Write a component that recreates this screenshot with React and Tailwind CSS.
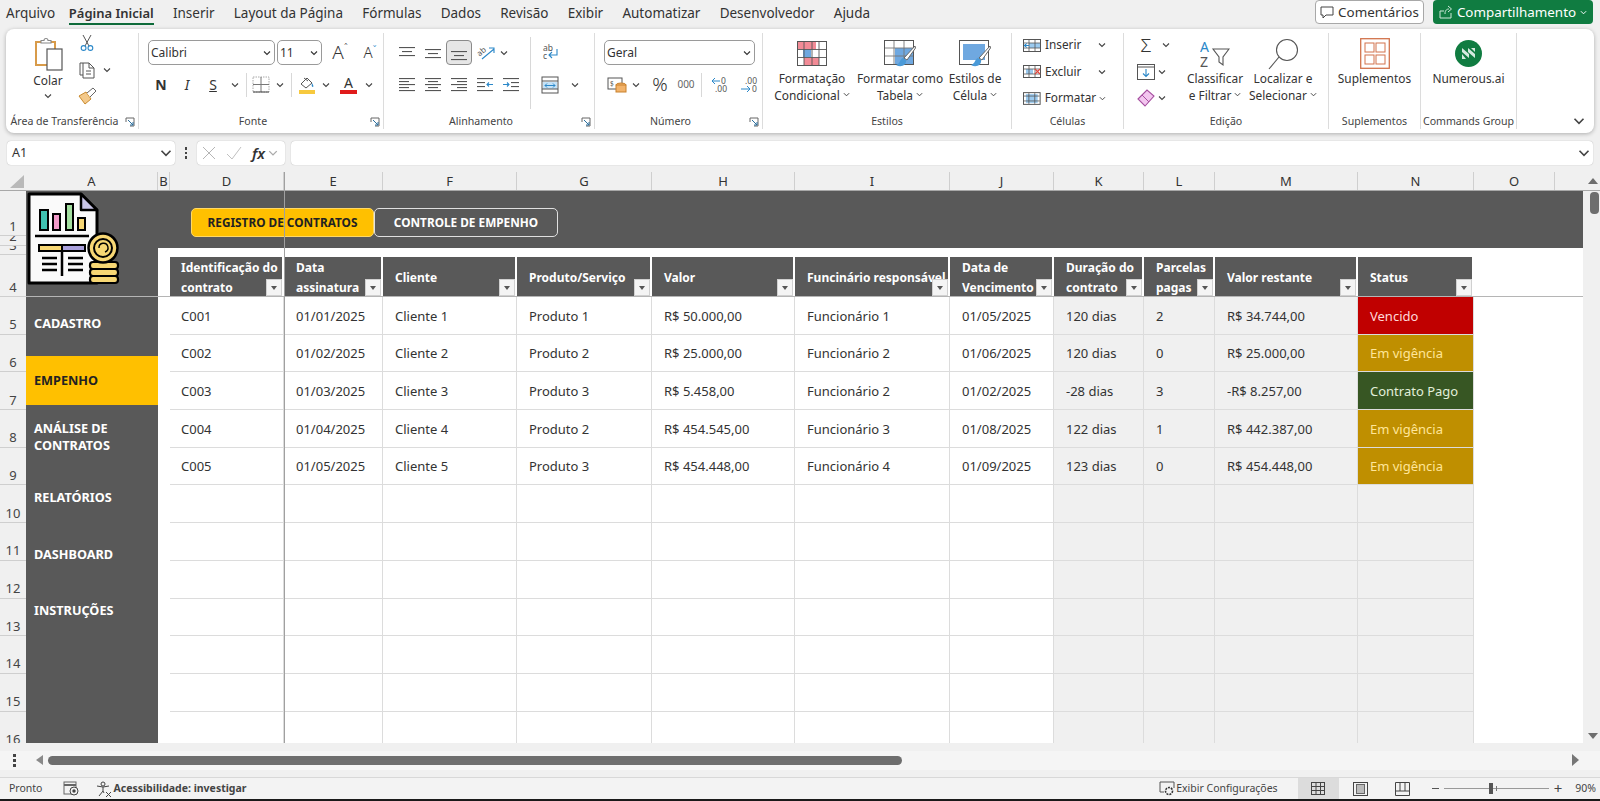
import React from "react";

const UI = "font-['Open_Sans','Noto_Sans',sans-serif]";
const COLS = "grid grid-cols-[12px_114px_99px_134px_135px_143px_155px_104px_90px_71px_143px_116px_81px_1fr]";

function Chev({ className = "", size = 8, color = "#444" }) {
  return (
    <svg width={size} height={size} viewBox="0 0 8 8" className={className}>
      <path d="M1 2.5 L4 5.5 L7 2.5" fill="none" stroke={color} strokeWidth="1.1" />
    </svg>
  );
}
function Launcher() {
  return (
    <svg width="10" height="10" viewBox="0 0 10 10" className="absolute right-[3px] bottom-[2px]">
      <path d="M1 5 V1 H9 V9 H5" fill="none" stroke="#666" strokeWidth="1" />
      <path d="M3 3 L8 8 M8 5 V8 H5" fill="none" stroke="#2b6f9e" strokeWidth="1" />
    </svg>
  );
}
function Group({ className = "", label, launcher, children, labelClass = "" }) {
  return (
    <div className={"relative h-full flex flex-col border-r border-[#dcdcdc] shrink-0 " + className}>
      <div className="flex-1 flex min-h-0">{children}</div>
      <div className={"h-[11px] mb-[2px] flex items-center justify-center text-[10.6px] leading-[11px] text-[#444] whitespace-nowrap " + labelClass}>{label}</div>
      {launcher && <Launcher />}
    </div>
  );
}
function Cell({ className = "", children }) {
  return <div className={"flex items-center justify-center shrink-0 h-full " + className}>{children}</div>;
}
function Sep({ className = "" }) {
  return <div className={"w-px bg-[#d8d8d8] shrink-0 " + className} />;
}
function BigBtn({ className = "", icon, lines }) {
  return (
    <div className={"flex flex-col items-center pt-[4px] shrink-0 " + className}>
      <div className="h-[33px] flex items-center justify-center">{icon}</div>
      <div className="text-[11.9px] leading-[16.5px] text-[#333] text-center whitespace-nowrap">
        {lines.map((l, i) => (
          <div key={i} className="flex items-center justify-center gap-[3px]">
            {l.replace("^", "")}
            {l.endsWith("^") && <Chev size={7} />}
          </div>
        ))}
      </div>
    </div>
  );
}
function Select({ className = "", text }) {
  return (
    <div className={"h-[25px] flex items-center justify-between pl-[2px] pr-[3px] border border-[#9a9a9a] rounded-[5px] bg-white text-[12px] text-[#333] shrink-0 " + className}>
      {text}
      <Chev size={8} color="#333" />
    </div>
  );
}

function Lines({ y }) {
  const widths = [16, 10, 16];
  return (
    <svg width="18" height="18" viewBox="0 0 18 18">
      {widths.map((w, i) => (
        <rect key={i} x={9 - w / 2} y={y[i]} width={w} height="1.1" fill="#555" />
      ))}
    </svg>
  );
}
const AlignAll = ({ x }) => (
  <svg width="18" height="18" viewBox="0 0 18 18">
    {[2, 5, 8, 11, 14].map((y, i) => {
      const w = i % 2 ? 10 : 16;
      const x0 = x === "left" ? 1 : x === "right" ? 17 - w : 9 - w / 2;
      return <rect key={i} x={x0} y={y} width={w} height="1.1" fill="#555" />;
    })}
  </svg>
);
const Indent = ({ flip }) => (
  <svg width="18" height="18" viewBox="0 0 18 18">
    {[2, 14].map((y) => <rect key={y} x="1" y={y} width="16" height="1.1" fill="#555" />)}
    {[6, 10].map((y) => <rect key={y} x={flip ? 9 : 1} y={y} width="8" height="1.1" fill="#555" />)}
    <path d={flip ? "M1 8.5 H7 M5 6.5 L7 8.5 L5 10.5" : "M17 8.5 H11 M13 6.5 L11 8.5 L13 10.5"} fill="none" stroke="#2b88c9" strokeWidth="1.1" />
  </svg>
);

const ClipIcon = () => (
  <svg width="30" height="34" viewBox="0 0 30 34">
    <path d="M3 5 H22 V28 H3 Z" fill="#fff" stroke="#d89b4a" strokeWidth="2" />
    <path d="M8 6 V3.5 H11 A2 2 0 0 1 15 3.5 H18 V6 Z" fill="#fff" stroke="#888" strokeWidth="1.1" />
    <rect x="14" y="12" width="15" height="21" fill="#fff" stroke="#555" strokeWidth="1.2" />
  </svg>
);
const Scissors = () => (
  <svg width="14" height="18" viewBox="0 0 14 18">
    <path d="M3 1 L9 12 M11 1 L5 12" stroke="#555" strokeWidth="1" fill="none" />
    <circle cx="3.6" cy="14" r="2.4" fill="none" stroke="#2b88c9" strokeWidth="1.1" />
    <circle cx="10.4" cy="14" r="2.4" fill="none" stroke="#2b88c9" strokeWidth="1.1" />
  </svg>
);
const CopyIcon = () => (
  <svg width="18" height="18" viewBox="0 0 18 18">
    <path d="M5 2 H2 V14 H5" fill="none" stroke="#555" strokeWidth="1" />
    <path d="M5 2 H11 L16 7 V17 H5 Z M11 2 V7 H16 M8 10 H13 M8 13 H13" fill="none" stroke="#555" strokeWidth="1" />
  </svg>
);
const Brush = () => (
  <svg width="20" height="18" viewBox="0 0 20 18">
    <path d="M1 9 L8 5 L13 12 L7 17 Z" fill="#f3c98b" stroke="#c98a2d" strokeWidth="1" />
    <path d="M9 6 L15 1 L18 4 L12 10" fill="#fff" stroke="#666" strokeWidth="1" />
  </svg>
);

const CondIcon = () => (
  <svg width="30" height="25" viewBox="0 0 30 25">
    <rect x="0.5" y="0.5" width="29" height="24" fill="#fff" stroke="#555" />
    <rect x="1" y="1" width="18" height="7" fill="#f28b96" />
    <rect x="6" y="8.5" width="8" height="7.5" fill="#6fa8e0" />
    <rect x="7" y="17" width="15" height="7" fill="#f28b96" />
    <path d="M7 1 V24 M15 1 V24 M22 1 V24 M1 8.5 H29 M1 16.5 H29" stroke="#555" strokeWidth="0.9" />
  </svg>
);
const TableIcon = () => (
  <svg width="32" height="28" viewBox="0 0 32 28">
    <rect x="0.5" y="0.5" width="29" height="24" fill="#fff" stroke="#555" />
    <rect x="11" y="8" width="18" height="16" fill="#6fa8e0" />
    <path d="M10 1 V24 M20 1 V24 M1 8 H29 M1 16 H29" stroke="#777" strokeWidth="0.9" />
    <path d="M31 6 L20 18 L23 20 L31.5 8 Z" fill="#fff" stroke="#666" />
    <path d="M19 18 C15 20 17 23 12 25 C17 28 23 25 22 20 Z" fill="#4a9ad8" />
  </svg>
);
const CellStyleIcon = () => (
  <svg width="32" height="28" viewBox="0 0 32 28">
    <rect x="0.5" y="0.5" width="29" height="24" fill="#fff" stroke="#555" />
    <rect x="4" y="4" width="22" height="16" fill="#6fa8e0" />
    <path d="M31 6 L20 18 L23 20 L31.5 8 Z" fill="#fff" stroke="#666" />
    <path d="M19 18 C15 20 17 23 12 25 C17 28 23 25 22 20 Z" fill="#4a9ad8" />
  </svg>
);
const InsertIcon = ({ kind }) => (
  <svg width="18" height="15" viewBox="0 0 18 15">
    <rect x="0.5" y="1.5" width="17" height="12" fill="#fff" stroke="#555" />
    {kind === "ins" && <rect x="6" y="5" width="11" height="5" fill="#9ccbf0" />}
    {kind === "fmt" && <rect x="3" y="3" width="12" height="9" fill="#9ccbf0" />}
    {kind === "del" && <rect x="3" y="5" width="7" height="5" fill="#9ccbf0" />}
    <path d="M6 2 V13 M12 2 V13 M1 5 H17 M1 10 H17" stroke="#555" strokeWidth="0.8" />
    {kind === "ins" && <path d="M1 7.5 H6 M4 5.5 L1 7.5 L4 9.5" stroke="#2b88c9" fill="none" />}
    {kind === "del" && <path d="M12 5 L17 10 M17 5 L12 10" stroke="#e0483f" strokeWidth="1.2" />}
  </svg>
);
const PaintCan = () => (
  <svg width="18" height="20" viewBox="0 0 18 20">
    <path d="M3 9 L9 3 L14 8 L8 13 Z" fill="#fff" stroke="#555" />
    <path d="M6 3 L10 6" stroke="#555" />
    <path d="M14 8 Q16 11 15 12 Q13 12 14 8" fill="#2b88c9" />
    <rect x="1" y="15" width="16" height="4" fill="#f7c93e" />
  </svg>
);
const Logo = () => (
  <svg width="93" height="94" viewBox="0 0 93 94">
    <path d="M2 2 H54 L70 18 V91 H2 Z" fill="#fafafa" stroke="#000" strokeWidth="3" strokeLinejoin="round" />
    <path d="M54 2 L70 18 H54 Z" fill="#c8c4e6" stroke="#000" strokeWidth="2.5" strokeLinejoin="round" />
    <rect x="13" y="18" width="8" height="20" fill="#3fc0b0" stroke="#000" strokeWidth="2" />
    <rect x="26" y="22" width="7" height="16" fill="#f29ac9" stroke="#000" strokeWidth="2" />
    <rect x="39" y="12" width="7" height="26" fill="#a3dfa0" stroke="#000" strokeWidth="2" />
    <rect x="51" y="26" width="7" height="12" fill="#f7d774" stroke="#000" strokeWidth="2" />
    <path d="M8 44 H62" stroke="#000" strokeWidth="2.5" />
    <rect x="12" y="53" width="23" height="6" fill="#f7d774" stroke="#000" strokeWidth="2" />
    <rect x="35" y="53" width="23" height="6" fill="#a9a0dc" stroke="#000" strokeWidth="2" />
    <path d="M35 59 V84 M15 66 H30 M15 72 H30 M15 78 H30 M41 66 H56 M41 72 H56 M41 78 H56" stroke="#000" strokeWidth="2.5" />
    <rect x="63" y="70" width="28" height="7" rx="3" fill="#f7d774" stroke="#000" strokeWidth="2.2" />
    <rect x="63" y="77" width="28" height="7" rx="3" fill="#f7d774" stroke="#000" strokeWidth="2.2" />
    <rect x="63" y="84" width="28" height="7" rx="3" fill="#f7d774" stroke="#000" strokeWidth="2.2" />
    <circle cx="76" cy="56" r="14.5" fill="#f7d774" stroke="#000" strokeWidth="2.5" />
    <circle cx="76" cy="56" r="9" fill="#f7d774" stroke="#000" strokeWidth="2" />
    <path d="M72 56 a4.5 4.5 0 1 1 6 4" fill="none" stroke="#000" strokeWidth="1.4" />
  </svg>
);

const Tabs = ["Inserir", "Layout da Página", "Fórmulas", "Dados", "Revisão", "Exibir", "Automatizar", "Desenvolvedor", "Ajuda"];

function TopBar() {
  return (
    <div className="h-[29px] flex items-start pl-[6px] text-[13.5px] text-[#333] shrink-0">
      <div className="flex gap-[19.2px] items-start h-[25px]">
        <div className="leading-[26px]">Arquivo</div>
        <div className="leading-[26px] h-[25px] text-[13px] font-semibold border-b-2 border-[#0e6b3a] -ml-[5.5px]">Página Inicial</div>
        {Tabs.map((t) => <div key={t} className="leading-[26px] whitespace-nowrap">{t}</div>)}
      </div>
      <div className="ml-auto flex gap-[9px] mr-[7px]">
        <div className="h-[24px] w-[109px] bg-white border border-[#a8a8a8] rounded-[4px] flex items-center justify-center gap-[4px] text-[13.4px]">
          <svg width="14" height="14" viewBox="0 0 14 14"><path d="M1 2 H13 V10 H6 L3 13 V10 H1 Z" fill="none" stroke="#444" /></svg>
          Comentários
        </div>
        <div className="h-[24px] w-[160px] bg-[#107c41] rounded-[4px] flex items-center justify-center gap-[4px] text-[13.4px] text-white">
          <svg width="14" height="14" viewBox="0 0 14 14"><path d="M1 6 H5 M1 6 V13 H12 V8 M6 9 C6 5 8 4 10 4 M9 1 L12.5 4 L9 7" fill="none" stroke="#cfe8da" /></svg>
          Compartilhamento
          <Chev size={7} color="#fff" />
        </div>
      </div>
    </div>
  );
}

function RowCol({ rows }) {
  return (
    <div className="flex flex-col gap-[2.5px]">
      {rows.map((r, i) => <div key={i} className="h-[24px] flex items-center">{r}</div>)}
    </div>
  );
}

function Ribbon() {
  return (
    <div className="mx-[6px] h-[104px] bg-white rounded-[8px] shadow-[0_1px_4px_rgba(0,0,0,0.28)] py-[4px] flex shrink-0 text-[#333]">
      <Group className="w-[133px]" label="Área de Transferência" launcher labelClass="pr-[15px]">
        <div className="w-[13px]" />
        <div className="w-[58px] flex flex-col items-center pt-[4px]">
          <div className="h-[34px]"><ClipIcon /></div>
          <div className="text-[11.9px] leading-[16px] mt-[1px]">Colar</div>
          <Chev size={8} className="mt-[4px]" />
        </div>
        <div className="-mt-[2px]">
          <RowCol rows={[
            <div className="w-[18px] ml-px flex justify-center"><Scissors /></div>,
            <div className="flex items-center ml-px"><CopyIcon /><Chev size={8} className="ml-[7px]" /></div>,
            <div className="ml-px"><Brush /></div>,
          ]} />
        </div>
      </Group>

      <Group className="w-[245px]" label="Fonte" launcher labelClass="pr-[16px]">
        <div className="pl-[9px] pt-[7px] flex flex-col gap-[7px]">
          <div className="flex h-[25px] items-center gap-[2px]">
            <Select className="w-[127px]" text="Calibri" />
            <Select className="w-[45px]" text="11" />
            <Cell className="w-[30px] text-[19px] font-light ml-[1px]">A<span className="text-[10px] -mt-2">ˆ</span></Cell>
            <Cell className="w-[26px] text-[15px] font-light">A<span className="text-[10px] -mt-1 text-[#2b88c9]">ˇ</span></Cell>
          </div>
          <div className="flex h-[25px] items-center">
            <Cell className="w-[26px] font-bold text-[14px] text-[#333]">N</Cell>
            <Cell className="w-[26px] italic text-[14px] font-['Liberation_Serif',serif]">I</Cell>
            <Cell className="w-[26px] underline text-[14px]">S</Cell>
            <Cell className="w-[18px]"><Chev /></Cell>
            <Sep className="h-[24px] mx-[2px]" />
            <Cell className="w-[23px]">
              <svg width="18" height="17" viewBox="0 0 18 17"><rect x="1" y="1" width="16" height="15" fill="none" stroke="#aaa" strokeDasharray="1.5 1" /><path d="M9 1 V16 M1 8.5 H17" stroke="#777" /><path d="M1 16 H17" stroke="#444" /></svg>
            </Cell>
            <Cell className="w-[16px]"><Chev /></Cell>
            <Sep className="h-[24px] mx-[3px]" />
            <Cell className="w-[23px]"><PaintCan /></Cell>
            <Cell className="w-[15px]"><Chev /></Cell>
            <Cell className="w-[31px] flex-col">
              <span className="text-[14px] leading-[14px]">A</span>
              <span className="w-[17px] h-[4px] bg-[#e01b1b]" />
            </Cell>
            <Cell className="w-[10px]"><Chev /></Cell>
          </div>
        </div>
      </Group>

      <Group className="w-[211px]" label="Alinhamento" launcher labelClass="pr-[16px]">
        <div className="w-[146px] pl-[10px] pt-[7px] flex flex-col gap-[7px]">
          <div className="flex h-[25px] items-center">
            <Cell className="w-[26px]"><Lines y={[3, 7, 11]} /></Cell>
            <Cell className="w-[26px]"><Lines y={[5, 9, 13]} /></Cell>
            <Cell className="w-[26px] bg-[#e6e6e6] border border-[#8a8a8a] rounded-[4px]"><Lines y={[7, 11, 15]} /></Cell>
            <Cell className="w-[28px]">
              <svg width="20" height="18" viewBox="0 0 20 18" className="overflow-visible"><text x="1" y="10" fontSize="8" fill="#555" transform="rotate(-40 6 8)">ab</text><path d="M6 15 L18 5 M13 4 H18 V9" fill="none" stroke="#2b88c9" strokeWidth="1.1" /></svg>
            </Cell>
            <Cell className="w-[8px]"><Chev /></Cell>
          </div>
          <div className="flex h-[25px] items-center">
            <Cell className="w-[26px]"><AlignAll x="left" /></Cell>
            <Cell className="w-[26px]"><AlignAll x="center" /></Cell>
            <Cell className="w-[26px]"><AlignAll x="right" /></Cell>
            <Cell className="w-[26px]"><Indent /></Cell>
            <Cell className="w-[26px]"><Indent flip /></Cell>
          </div>
        </div>
        <Sep className="h-[72px] mt-[4px]" />
        <div className="pt-[7px] flex flex-col gap-[7px]">
          <Cell className="w-[40px] !h-[25px]">
            <svg width="18" height="20" viewBox="0 0 18 20"><text x="1" y="8" fontSize="8.5" fill="#555">ab</text><text x="1" y="16" fontSize="8.5" fill="#555">c</text><path d="M15 6 V12 H7 M10 9 L7 12 L10 15" fill="none" stroke="#2b88c9" strokeWidth="1.1" /></svg>
          </Cell>
          <div className="flex h-[25px] items-center">
            <Cell className="w-[38px]">
              <svg width="18" height="18" viewBox="0 0 18 18"><rect x="1" y="1" width="16" height="16" fill="#fff" stroke="#555" /><rect x="2" y="6" width="14" height="7" fill="#c5e2f7" /><path d="M1 5 H17 M1 13 H17" stroke="#555" /><path d="M4 9.5 H14 M6 7.5 L4 9.5 L6 11.5 M12 7.5 L14 9.5 L12 11.5" fill="none" stroke="#2b88c9" /></svg>
            </Cell>
            <Cell className="w-[12px]"><Chev /></Cell>
          </div>
        </div>
      </Group>

      <Group className="w-[168px]" label="Número" launcher labelClass="pr-[16px]">
        <div className="pl-[9px] pt-[7px] flex flex-col gap-[7px]">
          <Select className="w-[151px]" text="Geral" />
          <div className="flex h-[25px] items-center">
            <Cell className="w-[26px]">
              <svg width="20" height="17" viewBox="0 0 20 17"><rect x="1" y="2" width="14" height="11" fill="none" stroke="#555" /><text x="3" y="10" fontSize="6.5" fill="#555">$</text><ellipse cx="14" cy="9" rx="5" ry="2" fill="#f2b36b" stroke="#c9812d" /><rect x="9" y="9" width="10" height="7" fill="#f2b36b" stroke="#c9812d" /></svg>
            </Cell>
            <Cell className="w-[12px]"><Chev /></Cell>
            <Cell className="w-[36px] text-[19px] font-light">%</Cell>
            <Cell className="w-[16px] text-[10px] text-[#666]">000</Cell>
            <div className="w-[14px] flex justify-center"><Sep className="h-[24px]" /></div>
            <Cell className="w-[24px]">
              <svg width="20" height="18" viewBox="0 0 20 18"><text x="11" y="8" fontSize="8.5" fill="#555">0</text><text x="5" y="16" fontSize="8.5" fill="#555">.00</text><path d="M10 5 H2 M5 2 L2 5 L5 8" fill="none" stroke="#2b88c9" /></svg>
            </Cell>
            <Cell className="w-[30px] ml-[3px]">
              <svg width="20" height="18" viewBox="0 0 20 18"><text x="5" y="8" fontSize="8.5" fill="#555">.00</text><text x="12" y="16" fontSize="8.5" fill="#555">0</text><path d="M1 13 H10 M7 10 L10 13 L7 16" fill="none" stroke="#2b88c9" /></svg>
            </Cell>
          </div>
        </div>
      </Group>

      <Group className="w-[249px]" label="Estilos">
        <BigBtn className="w-[98px]" icon={<CondIcon />} lines={["Formatação", "Condicional^"]} />
        <BigBtn className="w-[78px]" icon={<TableIcon />} lines={["Formatar como", "Tabela^"]} />
        <BigBtn className="w-[72px]" icon={<CellStyleIcon />} lines={["Estilos de", "Célula^"]} />
      </Group>

      <Group className="w-[112px]" label="Células">
        <div className="pl-[11px] w-full">
          <RowCol rows={[
            <div className="w-[83px] flex items-center text-[11.8px]"><InsertIcon kind="ins" /><span className="ml-[4px]">Inserir</span><Chev className="ml-auto" /></div>,
            <div className="w-[83px] flex items-center text-[11.8px]"><InsertIcon kind="del" /><span className="ml-[4px]">Excluir</span><Chev className="ml-auto" /></div>,
            <div className="w-[83px] flex items-center text-[11.8px]"><InsertIcon kind="fmt" /><span className="ml-[4px]">Formatar</span><Chev size={7} className="ml-[3px]" /></div>,
          ]} />
        </div>
      </Group>

      <Group className="w-[205px]" label="Edição">
        <div className="w-[57px] pl-[13px] shrink-0">
          <RowCol rows={[
            <div className="flex items-center text-[19px] leading-none font-light"><span className="w-[18px] text-center">Σ</span><Chev className="ml-[7px]" /></div>,
            <div className="flex items-center">
              <svg width="18" height="16" viewBox="0 0 18 16"><rect x="0.5" y="0.5" width="17" height="15" fill="#fff" stroke="#555" /><path d="M0.5 3 H17.5" stroke="#555" /><path d="M9 5 V12 M6 9.5 L9 12.5 L12 9.5" fill="none" stroke="#2b88c9" strokeWidth="1.1" /></svg>
              <Chev className="ml-[3px]" />
            </div>,
            <div className="flex items-center">
              <svg width="18" height="18" viewBox="0 0 18 18"><path d="M1 10 L10 1 L17 7 L8 17 Z" fill="#f3c6ef" stroke="#a64fa0" strokeWidth="1.1" /><path d="M5 6 L12 13" stroke="#a64fa0" /></svg>
              <Chev className="ml-[3px]" />
            </div>,
          ]} />
        </div>
        <BigBtn className="w-[68px]" icon={
          <svg width="30" height="30" viewBox="0 0 30 30"><text x="0" y="13" fontSize="14" fill="#2b88c9">A</text><text x="0" y="28" fontSize="14" fill="#555">Z</text><path d="M13 10 H29 L23 18 V26 L19 23 V18 Z" fill="none" stroke="#555" strokeWidth="1.1" /></svg>
        } lines={["Classificar", "e Filtrar^"]} />
        <BigBtn className="w-[68px]" icon={
          <svg width="32" height="32" viewBox="0 0 32 32"><circle cx="20" cy="12" r="10.5" fill="none" stroke="#555" strokeWidth="1.1" /><path d="M12 19 L2 31" stroke="#555" strokeWidth="1.1" /></svg>
        } lines={["Localizar e", "Selecionar^"]} />
      </Group>

      <Group className="w-[92px]" label="Suplementos">
        <BigBtn className="w-full" icon={
          <svg width="30" height="31" viewBox="0 0 30 31"><rect x="0.7" y="0.7" width="28.6" height="29.6" fill="none" stroke="#d2734c" strokeWidth="1.3" /><rect x="5" y="5" width="9" height="9" fill="none" stroke="#d2734c" /><rect x="16" y="5" width="9" height="9" fill="none" stroke="#d2734c" /><rect x="5" y="17" width="9" height="9" fill="none" stroke="#d2734c" /><rect x="16" y="17" width="9" height="9" fill="none" stroke="#d2734c" /></svg>
        } lines={["Suplementos"]} />
      </Group>

      <Group className="w-[96px]" label="Commands Group">
        <BigBtn className="w-full" icon={
          <svg width="27" height="27" viewBox="0 0 27 27"><circle cx="13.5" cy="13.5" r="13.5" fill="#107c41" /><path d="M7 8 L7 12 L14 18 L14 14 Z M13 8 L13 12 L20 18 L20 14 Z M7 14 L7 19 L11 19 Z M16 8 L20 12 L20 8 Z" fill="#d6e9df" /></svg>
        } lines={["Numerous.ai"]} />
      </Group>
      <div className="flex-1 flex items-end justify-end pr-[9px] pb-[2px]">
        <Chev size={12} color="#444" />
      </div>
    </div>
  );
}

function FormulaBar() {
  return (
    <div className="mt-[8px] h-[24px] flex px-[7px] gap-0 shrink-0 text-[#333]">
      <div className="w-[168px] bg-white rounded-[4px] shadow-[0_0_1px_rgba(0,0,0,0.35)] flex items-center justify-between pl-[5px] pr-[3px] text-[12.5px]">
        A1 <Chev size={12} />
      </div>
      <div className="w-[22px] flex flex-col items-center justify-center gap-[2px]">
        <span className="w-[2.5px] h-[2.5px] bg-[#444]" /><span className="w-[2.5px] h-[2.5px] bg-[#444]" /><span className="w-[2.5px] h-[2.5px] bg-[#444]" />
      </div>
      <div className="w-[88px] bg-white rounded-[4px] shadow-[0_0_1px_rgba(0,0,0,0.35)] flex items-center pl-[5px] gap-[10px]">
        <svg width="14" height="14" viewBox="0 0 14 14"><path d="M1 1 L13 13 M13 1 L1 13" stroke="#b5b5b5" /></svg>
        <svg width="16" height="14" viewBox="0 0 16 14"><path d="M1 8 L6 13 L15 1" stroke="#c0c0c0" fill="none" /></svg>
        <span className="italic font-semibold text-[15px] font-['Liberation_Serif',serif]">fx</span>
        <Chev size={10} color="#aaa" className="-ml-[7px]" />
      </div>
      <div className="ml-[6px] flex-1 bg-white rounded-[4px] shadow-[0_0_1px_rgba(0,0,0,0.35)] flex items-center justify-end pr-[3px]">
        <Chev size={12} />
      </div>
    </div>
  );
}

const colHeads = [
  ["A", "w-[132px]"], ["B", "w-[12px]"], ["D", "w-[114px]"], ["E", "w-[99px]"], ["F", "w-[134px]"], ["G", "w-[135px]"], ["H", "w-[143px]"],
  ["I", "w-[155px]"], ["J", "w-[104px]"], ["K", "w-[90px]"], ["L", "w-[71px]"], ["M", "w-[143px]"], ["N", "w-[116px]"], ["O", "w-[81px]"],
];

function ColHeader() {
  return (
    <div className="mt-[7px] h-[19px] flex shrink-0 border-b border-[#a8a8a8]">
      <div className="w-[26px] flex items-end justify-end p-[2px]">
        <div className="w-0 h-0 border-l-[14px] border-l-transparent border-b-[13px] border-b-[#b9b9b9]" />
      </div>
      {colHeads.map(([c, w]) => (
        <div key={c} className={"text-[13px] leading-[18px] text-center text-[#333] border-r border-[#cfcfcf] " + w}>{c}</div>
      ))}
      <div className="ml-auto w-[17px] flex items-center justify-end pr-[2px]">
        <div className="w-0 h-0 border-l-[5px] border-r-[5px] border-b-[6px] border-l-transparent border-r-transparent border-b-[#6e6e6e]" />
      </div>
    </div>
  );
}

const rowLabels = [
  ["1", "h-[45px]"], ["2", "h-[10px]"], ["3", "h-[9px]"], ["4", "h-[42px]"],
  ...["5", "6", "7", "8", "9", "10", "11", "12", "13", "14", "15", "16"].map((n) => [n, "h-[37.7px]"]),
];
function RowHeader() {
  return (
    <div className="w-[26px] shrink-0 flex flex-col bg-[#f0f0f0]">
      {rowLabels.map(([n, h]) => (
        <div key={n} className={"relative overflow-hidden shrink-0 border-b border-[#cfcfcf] text-[13px] leading-[17px] text-center text-[#444] flex items-end justify-center " + h}>
          <span className="pb-[0.5px]">{n}</span>
        </div>
      ))}
    </div>
  );
}

const menu = [
  ["CADASTRO", "h-[54px]"],
  ["EMPENHO", "h-[49px] mt-[5px] bg-[#ffc000] !text-[#222]"],
  [<>ANÁLISE DE<br />CONTRATOS</>, "h-[64px]"],
  ["RELATÓRIOS", "h-[58px]"],
  ["DASHBOARD", "h-[56px]"],
  ["INSTRUÇÕES", "h-[56px]"],
];

function Sidebar() {
  return (
    <div className="w-[132px] shrink-0 bg-[#595959] flex flex-col">
      <div className="h-[106px] border-b border-[#b5b5b5] relative">
        <div className="absolute left-px top-px"><Logo /></div>
      </div>
      {menu.map(([t, cls], i) => (
        <div key={i} className={"flex items-center pl-[8px] font-bold text-[12.7px] leading-[17.5px] text-white " + cls}>{t}</div>
      ))}
    </div>
  );
}

function FilterBtn() {
  return (
    <div className="absolute right-0 bottom-0 w-[16px] h-[17px] bg-[#f4f4f4] border border-[#d0d0d0] flex items-center justify-center">
      <div className="w-0 h-0 border-l-[3px] border-r-[3px] border-t-[4px] border-l-transparent border-r-transparent border-t-[#555]" />
    </div>
  );
}

const headers = [
  <>Identificação do<br />contrato</>, <>Data<br />assinatura</>, "Cliente", "Produto/Serviço", "Valor", "Funcinário responsável",
  <>Data de<br />Vencimento</>, <>Duração do<br />contrato</>, <>Parcelas<br />pagas</>, "Valor restante", "Status",
];

const data = [
  ["C001", "01/01/2025", "Cliente 1", "Produto 1", "R$ 50.000,00", "Funcionário 1", "01/05/2025", "120 dias", "2", "R$ 34.744,00", "Vencido"],
  ["C002", "01/02/2025", "Cliente 2", "Produto 2", "R$ 25.000,00", "Funcionário 2", "01/06/2025", "120 dias", "0", "R$ 25.000,00", "Em vigência"],
  ["C003", "01/03/2025", "Cliente 3", "Produto 3", "R$ 5.458,00", "Funcionário 2", "01/02/2025", "-28 dias", "3", "-R$ 8.257,00", "Contrato Pago"],
  ["C004", "01/04/2025", "Cliente 4", "Produto 2", "R$ 454.545,00", "Funcionário 3", "01/08/2025", "122 dias", "1", "R$ 442.387,00", "Em vigência"],
  ["C005", "01/05/2025", "Cliente 5", "Produto 3", "R$ 454.448,00", "Funcionário 4", "01/09/2025", "123 dias", "0", "R$ 454.448,00", "Em vigência"],
  ...Array(7).fill(Array(11).fill("")),
];

const statusCls = {
  Vencido: "bg-[#c00000] text-[#ffd9d9]",
  "Em vigência": "bg-[#bf8f00] text-[#ffe699]",
  "Contrato Pago": "bg-[#375623] text-[#e2efda]",
};

function Table() {
  return (
    <div className="flex-1 min-w-0 bg-white flex flex-col">
      <div className="h-[57px] bg-[#595959] flex items-start pt-[17px] pl-[33px] shrink-0">
        <div className="h-[29px] w-[183px] bg-[#ffc000] border border-[#ffd966] rounded-[5px] flex items-center justify-center text-[11.8px] font-bold text-[#222]">REGISTRO DE CONTRATOS</div>
        <div className="h-[29px] w-[184px] bg-[#595959] border border-[#e0e0e0] rounded-[5px] flex items-center justify-center text-[11.8px] font-bold text-white">CONTROLE DE EMPENHO</div>
      </div>
      <div className={COLS + " pt-[9px] h-[49px] shrink-0 border-b border-[#b5b5b5]"}>
        <div />
        {headers.map((h, i) => (
          <div key={i} className={"relative bg-[#595959] text-white font-bold text-[12px] leading-[19.5px] pt-[2px] flex items-center whitespace-nowrap overflow-hidden mr-[2px] " + (i === 0 ? "pl-[11px] " : "pl-[12px] ") + (i === 10 ? "mr-0" : "")}>
            <div>{h}</div>
            <FilterBtn />
          </div>
        ))}
      </div>
      {data.map((r, ri) => (
        <div key={ri} className={COLS + " h-[37.7px] shrink-0"}>
          <div />
          {r.map((v, ci) => {
            const gray = ci >= 7 && ci <= 9;
            const st = ci === 10 ? statusCls[v] || "bg-[#f0f0f0]" : gray ? "bg-[#f0f0f0] text-[#333]" : "text-[#333]";
            return (
              <div key={ci} className={"flex items-center pt-[2px] text-[13px] whitespace-nowrap border-b border-r border-[#dcdcdc] " + (ci === 0 ? "pl-[11px] " : "pl-[12px] ") + st}>{v}</div>
            );
          })}
        </div>
      ))}
    </div>
  );
}

function VScroll() {
  return (
    <div className="w-[17px] shrink-0 bg-[#f0f0f0] flex flex-col items-center justify-between">
      <div className="w-[9px] h-[22px] mt-[1px] ml-[5px] bg-[#6e6e6e] rounded-[4px]" />
      <div className="mb-[4px] w-0 h-0 ml-[3px] border-l-[5px] border-r-[5px] border-t-[6px] border-l-transparent border-r-transparent border-t-[#6e6e6e]" />
    </div>
  );
}

function HScroll() {
  return (
    <div className="h-[34px] shrink-0 bg-[#f0f0f0] flex items-center py-[8px]">
      <div className="w-full h-[19px] bg-[#f5f5f5] flex items-center">
        <div className="w-[29px] flex flex-col items-center gap-[2px]">
          <span className="w-[3px] h-[3px] bg-[#444]" /><span className="w-[3px] h-[3px] bg-[#444]" /><span className="w-[3px] h-[3px] bg-[#444]" />
        </div>
        <div className="ml-[7px] w-0 h-0 border-t-[5px] border-b-[5px] border-r-[7px] border-t-transparent border-b-transparent border-r-[#8a8a8a]" />
        <div className="ml-[5px] w-[854px] h-[9px] rounded-[5px] bg-[#6e6e6e]" />
        <div className="ml-auto mr-[21px] w-0 h-0 border-t-[6px] border-b-[6px] border-l-[7px] border-t-transparent border-b-transparent border-l-[#777]" />
      </div>
    </div>
  );
}

function StatusBar() {
  return (
    <div className="h-[22px] shrink-0 bg-[#f3f3f3] border-t border-[#d8d8d8] flex items-center pl-[9px] text-[10.5px] text-[#444]">
      <span>Pronto</span>
      <svg className="ml-[21px]" width="16" height="15" viewBox="0 0 16 15"><rect x="1" y="1" width="12" height="12" fill="none" stroke="#666" /><path d="M1 4 H13" stroke="#666" strokeWidth="2" /><circle cx="11" cy="10" r="4" fill="#f3f3f3" stroke="#444" /><circle cx="11" cy="10" r="1.7" fill="#444" /></svg>
      <svg className="ml-[17px]" width="16" height="16" viewBox="0 0 16 16"><circle cx="7" cy="3" r="2" fill="none" stroke="#444" /><path d="M1 5 L7 6 L13 5 M7 6 V10 L3 15 M7 10 L8 12" fill="none" stroke="#444" /><path d="M10 11 L15 16 M15 11 L10 16" stroke="#444" /></svg>
      <span className="ml-[1px] font-bold">Acessibilidade: investigar</span>
      <div className="ml-auto flex items-center h-full">
        <svg width="16" height="15" viewBox="0 0 16 15"><path d="M5 11 H1 V1 H15 V7" fill="none" stroke="#555" /><circle cx="10" cy="10" r="3.5" fill="none" stroke="#333" strokeWidth="1.6" strokeDasharray="2 1" /></svg>
        <span className="ml-[1px]">Exibir Configurações</span>
        <div className="ml-[20px] w-[41px] h-full bg-[#dcdcdc] flex items-center justify-center">
          <svg width="14" height="13" viewBox="0 0 14 13"><rect x="0.5" y="0.5" width="13" height="12" fill="none" stroke="#444" /><path d="M5 1 V12 M9.5 1 V12 M1 4.5 H13 M1 8.5 H13" stroke="#444" /></svg>
        </div>
        <div className="w-[43px] flex justify-center">
          <svg width="15" height="14" viewBox="0 0 15 14"><rect x="0.5" y="0.5" width="14" height="13" fill="none" stroke="#444" /><rect x="3.5" y="2.5" width="8" height="9" fill="#bbb" stroke="#666" /></svg>
        </div>
        <div className="w-[41px] flex justify-center">
          <svg width="15" height="14" viewBox="0 0 15 14"><path d="M0.5 13.5 V0.5 H14.5 V13.5 Z M0.5 9 H14.5 M5 0.5 V9 M10 0.5 V9" fill="none" stroke="#444" /></svg>
        </div>
        <span className="ml-[9px] w-[7px] h-px bg-[#555]" />
        <div className="relative ml-[5px] w-[105px] h-px bg-[#999]">
          <div className="absolute left-[45px] -top-[5px] w-[4px] h-[11px] bg-[#555]" />
          <div className="absolute left-[52px] -top-[2px] w-px h-[5px] bg-[#777]" />
        </div>
        <span className="ml-[5px] text-[15px] leading-none">+</span>
        <span className="ml-[13px] mr-[4px]">90%</span>
      </div>
    </div>
  );
}

export default function App() {
  return (
    <div className={"relative w-[1600px] h-[801px] bg-[#f0f0f0] overflow-hidden flex flex-col border-b-2 border-[#1a1a1a] " + UI}>
      <TopBar />
      <Ribbon />
      <FormulaBar />
      <ColHeader />
      <div className="relative flex-1 min-h-0 flex overflow-hidden">
        <RowHeader />
        <Sidebar />
        <Table />
        <VScroll />
      </div>
      <HScroll />
      <StatusBar />
      <div className="absolute left-[284px] top-[172px] w-px h-[571px] bg-[#a0a0a0]" />
    </div>
  );
}
